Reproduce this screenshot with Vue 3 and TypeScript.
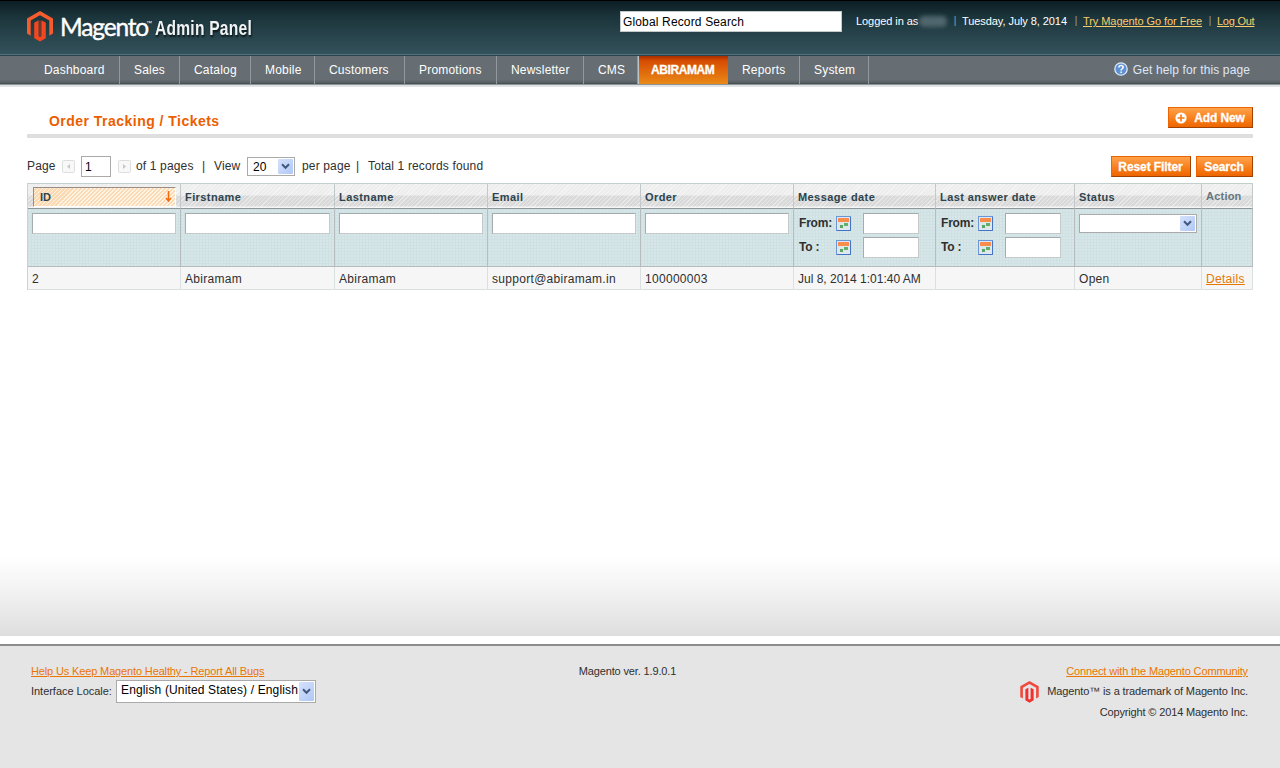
<script setup lang="ts">
interface NavItem { label: string; active?: boolean }

const nav: NavItem[] = [
  { label: 'Dashboard' }, { label: 'Sales' }, { label: 'Catalog' }, { label: 'Mobile' },
  { label: 'Customers' }, { label: 'Promotions' }, { label: 'Newsletter' }, { label: 'CMS' },
  { label: 'ABIRAMAM', active: true }, { label: 'Reports' }, { label: 'System' },
]

type Filter = 'text' | 'date' | 'select' | 'none'
interface Column { title: string; filter: Filter; value: string }

const columns: Column[] = [
  { title: 'ID', filter: 'text', value: '2' },
  { title: 'Firstname', filter: 'text', value: 'Abiramam' },
  { title: 'Lastname', filter: 'text', value: 'Abiramam' },
  { title: 'Email', filter: 'text', value: 'support@abiramam.in' },
  { title: 'Order', filter: 'text', value: '100000003' },
  { title: 'Message date', filter: 'date', value: 'Jul 8, 2014 1:01:40 AM' },
  { title: 'Last answer date', filter: 'date', value: '' },
  { title: 'Status', filter: 'select', value: 'Open' },
  { title: 'Action', filter: 'none', value: 'Details' },
]
const bounds = ['From:', 'To :']
</script>

<template>
  <div class="page">
    <header class="header">
      <div class="brand">
        <svg class="logo" viewBox="0 0 26 31">
          <path d="M13 0 26 7.5V22.5L22.3 24.7V9.6L13 4.3 3.7 9.6V24.7L0 22.5V7.5Z" fill="#f65c2e" />
          <path d="M7.2 11.7 11.6 9.2V25.2L13 26 14.4 25.2V9.2L18.8 11.7V27.2L13 30.6 7.2 27.2Z" fill="#f4461f" />
          <path d="M12.3 9.5H13.7V25.2L13 25.8 12.3 25.2Z" fill="#8d3a28" />
        </svg>
        <span class="wordmark">Magento</span><span class="tm">™</span>
        <span class="product">Admin Panel</span>
      </div>
      <div class="search">Global Record Search</div>
      <div class="session">
        <span class="who">Logged in as</span><span class="user"></span><i>|</i>
        <span class="today">Tuesday, July 8, 2014</span><i>|</i>
        <a class="try">Try Magento Go for Free</a><i>|</i>
        <a class="logout">Log Out</a>
      </div>
    </header>

    <nav class="nav">
      <div class="items">
        <a v-for="n in nav" :key="n.label" :class="{ active: n.active }">{{ n.label }}</a>
      </div>
      <a class="help">
        <svg viewBox="0 0 14 14">
          <circle cx="7" cy="7" r="6.2" fill="#5f92d2" stroke="#dce9f8" stroke-width="1.3" />
          <path d="M4.9 5.5C5 3.9 6 3.4 7.1 3.4S9.2 4.1 9.2 5.3C9.2 6.7 7.1 6.8 7.1 8.4M7.1 9.4V11" fill="none" stroke="#fff" stroke-width="1.5" />
        </svg>
        <span>Get help for this page</span>
      </a>
    </nav>

    <main class="main">
      <div class="title">
        <h3>Order Tracking / Tickets</h3>
        <button class="btn add">
          <svg viewBox="0 0 12 12"><circle cx="6" cy="6" r="5.6" fill="#fff" /><path d="M6 2.5V9.5M2.5 6H9.5" stroke="#f47a16" stroke-width="1.6" /></svg>
          <span>Add New</span>
        </button>
      </div>

      <div class="toolbar">
        <span class="t-page">Page</span>
        <svg class="pager" viewBox="0 0 13 13"><rect x=".5" y=".5" width="12" height="12" rx="1" fill="#f8f8f8" stroke="#dedede" /><path d="M8 4V9L5 6.5Z" fill="#c8c8c8" /></svg>
        <span class="page-no">1</span>
        <svg class="pager next" viewBox="0 0 13 13"><rect x=".5" y=".5" width="12" height="12" rx="1" fill="#f8f8f8" stroke="#dedede" /><path d="M5 4V9L8 6.5Z" fill="#c8c8c8" /></svg>
        <span class="t-of">of 1 pages</span>
        <span class="t-bar">|</span>
        <span class="t-view">View</span>
        <span class="select per-page"><span>20</span><b class="drop"><svg viewBox="0 0 9 7"><path d="M1 1.3 4.5 4.8 8 1.3" /></svg></b></span>
        <span class="t-per">per page</span>
        <span class="t-bar2">|</span>
        <span class="t-total">Total 1 records found</span>
        <span class="actions">
          <button class="btn reset"><span>Reset Filter</span></button>
          <button class="btn find"><span>Search</span></button>
        </span>
      </div>

      <div class="grid">
        <div v-for="(c, i) in columns" :key="c.title" class="th" :class="{ plain: c.filter === 'none' }">
          <div v-if="i === 0" class="sorted">
            <span>{{ c.title }}</span>
            <svg viewBox="0 0 7 11"><path d="M3.5 0V9.5M1 7 3.5 10 6 7" fill="none" stroke="#f56a0a" stroke-width="1.5" /></svg>
          </div>
          <span v-else>{{ c.title }}</span>
        </div>
        <div v-for="c in columns" :key="c.title + '-filter'" class="filter">
          <div v-if="c.filter === 'text'" class="input"></div>
          <template v-else-if="c.filter === 'date'">
            <div v-for="b in bounds" :key="b" class="range">
              <label>{{ b }}</label>
              <svg viewBox="0 0 15 15">
                <rect x=".5" y=".5" width="14" height="14" fill="#dbe8fa" stroke="#6a95d6" />
                <path d="M14.5 1V14.5H1" fill="none" stroke="#4474c4" />
                <rect x="2" y="2" width="11" height="4" fill="#f88d4c" />
                <rect x="2" y="6" width="11" height="7" fill="#dfe8e6" />
                <rect x="8" y="7" width="4" height="3" fill="#61b070" />
                <rect x="4" y="9" width="3" height="3" fill="#58a66d" />
              </svg>
              <div class="input small"></div>
            </div>
          </template>
          <div v-else-if="c.filter === 'select'" class="select status"><b class="drop"><svg viewBox="0 0 9 7"><path d="M1 1.3 4.5 4.8 8 1.3" /></svg></b></div>
        </div>
        <div v-for="c in columns" :key="c.title + '-cell'" class="td" :class="{ stamp: c.title === 'Message date' }">
          <a v-if="c.filter === 'none'">{{ c.value }}</a>
          <span v-else>{{ c.value }}</span>
        </div>
      </div>
    </main>

    <footer class="footer">
      <div class="left">
        <a>Help Us Keep Magento Healthy - Report All Bugs</a>
        <div class="locale">
          <span class="lbl">Interface Locale:</span>
          <span class="select lang"><span>English (United States) / English</span><b class="drop"><svg viewBox="0 0 9 7"><path d="M1 1.3 4.5 4.8 8 1.3" /></svg></b></span>
        </div>
      </div>
      <div class="center">Magento ver. 1.9.0.1</div>
      <div class="right">
        <a>Connect with the Magento Community</a>
        <div class="mark">
          <svg viewBox="0 0 26 31">
            <path d="M13 0 26 7.5V22.5L22.3 24.7V9.6L13 4.3 3.7 9.6V24.7L0 22.5V7.5Z" fill="#f04a3e" />
            <path d="M7.2 11.7 11.4 9.4V25.2L13 26.1 14.6 25.2V9.4L18.8 11.7V27.2L13 30.6 7.2 27.2Z" fill="#f0302c" />
          </svg>
          <span>Magento™ is a trademark of Magento Inc.</span>
        </div>
        <div class="copy">Copyright © 2014 Magento Inc.</div>
      </div>
    </footer>
  </div>
</template>

<style>
body { margin: 0; background: #e5e5e5; }
</style>

<style scoped>
* { box-sizing: border-box; }
.page { width: 1280px; height: 768px; display: flex; flex-direction: column; overflow: hidden; font: 12px/16px "Liberation Sans", Arial, sans-serif; letter-spacing: .3px; color: #2f2f2f; background: #fff; white-space: nowrap; }
svg { display: block; flex: none; }

.header { height: 56px; flex: none; display: flex; align-items: flex-start; color: #fff; background: linear-gradient(#0c1e23, #1c353c 30%, #35535d); border-top: 1px solid #000; box-shadow: inset 0 -1px #29434e, inset 0 -2px #53717a; }
.brand { display: flex; width: 593px; padding-left: 27px; flex: none; }
.logo { width: 26px; height: 31px; margin-top: 10px; }
.wordmark { font: 400 24.5px/32px Lato, sans-serif; letter-spacing: -1.15px; width: 86px; margin: 10px 0 0 7px; -webkit-text-stroke: .4px #fff; }
.tm { font-size: 6px; line-height: 10px; width: 7px; margin: 17px 2px 0 0; letter-spacing: 0; }
.product { font: 700 21px/24px "Liberation Sans", Arial, sans-serif; letter-spacing: .3px; margin-top: 15px; transform: scaleX(.743); transform-origin: 0 50%; color: #f0f3f3; text-shadow: 1px 2px 2px #0b171b; }
.search { width: 222px; height: 21px; margin: 10px 0 0 27px; padding-left: 2px; line-height: 20px; color: #000; background: #fff; border: 1px solid #c3c8c9; letter-spacing: .15px; flex: none; }
.session { display: flex; margin: 12px 0 0 14px; font-size: 11px; letter-spacing: -.07px; }
.session > * { flex: none; }
.session i { font-style: normal; width: 15px; padding-left: 1px; text-align: center; color: #93a3a8; font-size: 10px; }
.who { width: 63px; }
.user { width: 28px; height: 11px; margin-top: 3px; border-radius: 5px; background: #50666d; filter: blur(2px); }
.session a { color: #f9cc6c; text-decoration: underline; }
.today { width: 106px; }
.try { width: 119px; }
.session .logout { letter-spacing: -.25px; }

.nav { height: 31px; flex: none; display: flex; justify-content: space-between; padding: 0 30px; background: linear-gradient(#666e73 0 24px, #555c60 27px, #3e4548 28px, #dde2e4 29px, #e4e6e7 31px); color: #fff; }
.items { display: grid; grid-template-columns: 90px 60px 71px 64px 90px 92px 87px 54px 90px 72px 69px; height: 27px; }
.items a { padding-left: 14px; line-height: 28px; letter-spacing: .2px; border-right: 1px solid #92989b; }
.items a.active { font-weight: 700; letter-spacing: -.4px; padding-left: 12px; background: linear-gradient(#a92e00, #d84d03 5px, #e98a18); border-left: 1px solid #b9c5c9; border-right: 0; -webkit-text-stroke: .3px #fff; }
.help { display: flex; color: #dfe7f8; line-height: 28px; letter-spacing: .11px; }
.help svg { width: 14px; height: 14px; margin: 6px 5px 0 0; }

.main { height: 549px; flex: none; padding: 20px 27px 0; background: linear-gradient(#fff 470px, #f4f4f4 500px, #dedede); }
.title { height: 31px; display: flex; justify-content: space-between; border-bottom: 4px solid #dfdfdf; }
h3 { margin: 5px 0 0 22px; font-size: 14px; line-height: 18px; letter-spacing: .47px; color: #eb5e00; }
.btn { display: flex; align-items: center; justify-content: center; height: 21px; padding: 0; font: 700 12px/19px "Liberation Sans", Arial, sans-serif; color: #fff; border: 1px solid; border-color: #ed6502 #a04300 #a04300 #ed6502; background: linear-gradient(#ffa24a, #f77c17 60%, #ee6500); -webkit-text-stroke: .3px #fff; letter-spacing: -.08px; }
.btn span { margin-top: 1px; }
.add { width: 85px; letter-spacing: -.1px; padding-right: 1px; }
.add svg { width: 12px; height: 12px; margin-right: 7px; }
.reset { width: 80px; padding-right: 1px; }
.find { width: 57px; padding-right: 1px; }

.toolbar { display: flex; height: 45px; padding-top: 18px; line-height: 20px; letter-spacing: .15px; }
.toolbar > span { flex: none; }
.t-page { width: 35px; }
.pager { width: 13px; height: 13px; margin-top: 4px; }
.page-no { width: 30px; height: 21px; margin: 0 7px 0 6px; padding-left: 3px; border: 1px solid #aaa; color: #000; line-height: 21px; background: #fff; }
.t-of { width: 66px; margin-left: 5px; }
.t-bar { width: 12px; }
.t-view { width: 33px; }
.t-per { width: 54px; margin-left: 7px; }
.t-bar2 { width: 12px; }
.actions { display: flex; gap: 5px; margin-left: auto; }
.select { display: flex; justify-content: space-between; align-items: center; background: #fff; border: 1px solid #aaa; color: #000; }
.per-page { width: 48px; height: 19px; margin-top: 1px; padding-left: 5px; }
.drop { display: flex; align-items: center; justify-content: center; width: 15px; height: 15px; margin-right: 1px; background: linear-gradient(135deg, #d5e1fb, #b0c8f5); border-radius: 1px; flex: none; }
.drop svg { width: 9px; height: 7px; }
.drop path { fill: none; stroke: #435880; stroke-width: 2; }

.grid { display: grid; grid-template-columns: 153px 154px 153px 153px 153px 142px 139px 127px 51px; grid-template-rows: 25px 58px 23px; width: 1226px; border: 1px solid #cbd3d4; border-top-color: #c2cfcf; border-right: 0; border-bottom: 0; }
.th { padding: 1px 0 0 4px; font-size: 11px; line-height: 24px; font-weight: 700; letter-spacing: .42px; color: #2d444f; border-right: 1px solid #c3c8ca; border-bottom: 1px solid #8f9699; background: repeating-linear-gradient(135deg, #fff6 0 1px, #fff0 1px 3px), linear-gradient(#ededed 0 11px, #d9d9d9 12px 22px, #f4f4f4 23px); }
.th.plain { color: #67767e; padding-top: 0; letter-spacing: .22px; }
.sorted { display: flex; justify-content: space-between; height: 20px; margin: 2px 4px 0 1px; padding: 0 3px 0 6px; line-height: 19px; letter-spacing: 0; border: 1px solid #9b8d86; border-right-color: #fff; border-bottom-color: #fff; background: repeating-linear-gradient(135deg, #fff3e3 0 1.4px, #fbdab3 1.4px 2.83px); }
.sorted svg { width: 7px; height: 11px; margin-top: 3px; }
.filter { padding: 4px 4px 0; border-right: 1px solid #b7bdbf; border-bottom: 1px solid #b5bbbd; background-color: #d7e6e8; background-image: repeating-linear-gradient(#d0e1e3 0 1px, #0000 1px 3px), repeating-linear-gradient(90deg, #cfe0e2 0 1px, #0000 1px 3px); }
.input { height: 21px; background: #fff; border: 1px solid #a6abad; border-right-color: #c5c9ca; border-bottom-color: #c5c9ca; }
.range { display: flex; height: 24px; font-weight: 700; letter-spacing: -.2px; color: #2f2f2f; }
.range label { width: 38px; padding-left: 1px; line-height: 20px; }
.range svg { width: 15px; height: 15px; margin: 3px 12px 0 0; }
.input.small { width: 56px; }
.status { height: 19px; margin-top: 1px; width: 118px; justify-content: flex-end; }
.td { padding-left: 4px; line-height: 24px; height: 23px; background: #f6f6f6; border-right: 1px solid #dadfe0; border-bottom: 1px solid #dadfe0; letter-spacing: .3px; }
.stamp { letter-spacing: 0; }
.td a { color: #e67800; text-decoration: underline; }

.footer { flex: 1; margin-top: 8px; padding: 15px 32px 0 31px; display: grid; grid-template-columns: 400px 1fr 400px; border-top: 2px solid #8d8d8d; background: #e5e5e5; font-size: 11px; line-height: 20px; letter-spacing: -.14px; color: #2f2f2f; }
.footer a { color: #ea7601; text-decoration: underline; }
.left { display: flex; flex-direction: column; }
.locale { display: flex; }
.lbl { width: 85px; letter-spacing: -.03px; }
.lang { width: 200px; height: 23px; margin-top: -1px; padding-left: 4px; font-size: 12px; letter-spacing: .15px; }
.lang > span { line-height: 19px; margin-top: -2px; }
.lang .drop { height: 19px; }
.center { text-align: center; padding-right: 24px; }
.right { text-align: right; }
.mark { display: flex; justify-content: flex-end; height: 21px; line-height: 21px; letter-spacing: -.12px; }
.mark svg { width: 19px; height: 22px; margin-right: 8px; }
.copy { line-height: 21px; }
</style>
